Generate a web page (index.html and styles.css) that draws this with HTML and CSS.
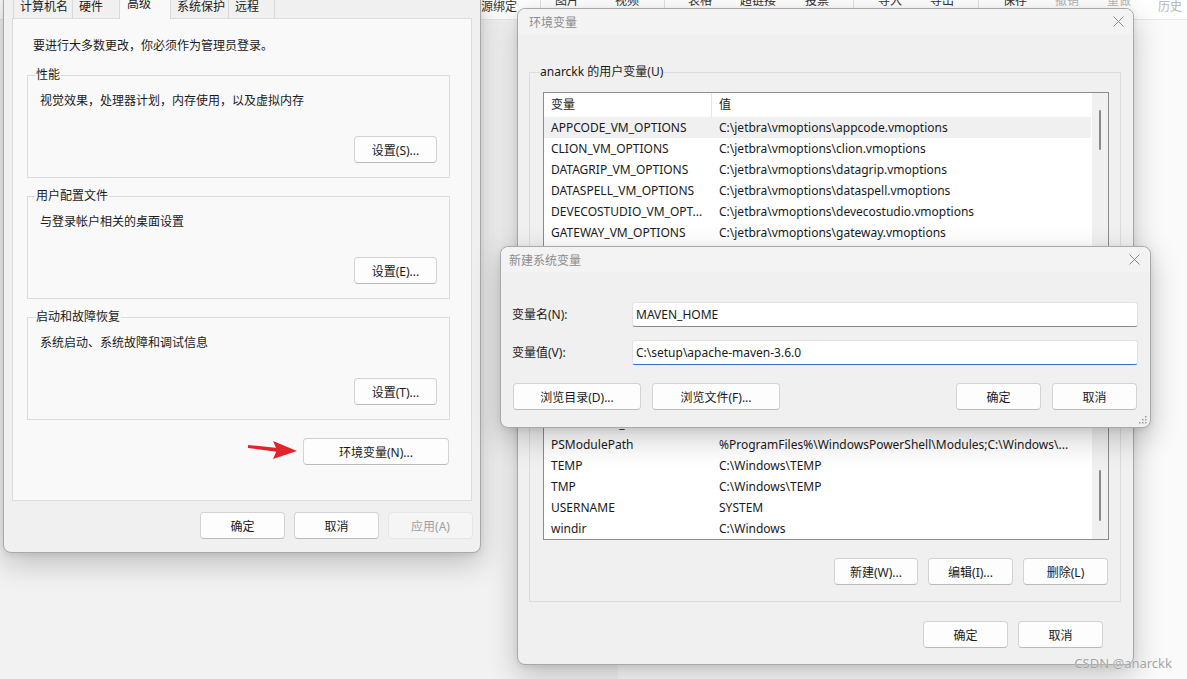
FILE: index.html
```html
<!DOCTYPE html>
<html lang="zh-CN">
<head>
<meta charset="utf-8">
<title>环境变量</title>
<link rel="stylesheet" href="styles.css">
</head>
<body>
<div class="desk">
  <div class="toolbar">
    <span class="tb tb-full">源绑定</span>
    <span class="tb-sep"></span>
    <span class="tb">图片</span>
    <span class="tb">视频</span>
    <span class="tb-sep"></span>
    <span class="tb">表格</span>
    <span class="tb">超链接</span>
    <span class="tb">投票</span>
    <span class="tb-sep"></span>
    <span class="tb">导入</span>
    <span class="tb">导出</span>
    <span class="tb-sep"></span>
    <span class="tb">保存</span>
    <span class="tb tb-dim">撤销</span>
    <span class="tb tb-dim">重做</span>
    <span class="tb tb-dim tb-full">历史</span>
  </div>
  <div class="workspace">
    <div class="ws-left"></div>
    <div class="ws-right"></div>
  </div>

  <!-- 系统属性 -->
  <section class="win sysprops">
    <div class="tabs">
      <div class="tab">计算机名</div>
      <div class="tab">硬件</div>
      <div class="tab active">高级</div>
      <div class="tab">系统保护</div>
      <div class="tab">远程</div>
    </div>
    <div class="tabpanel">
      <p class="note">要进行大多数更改，你必须作为管理员登录。</p>
      <fieldset class="group">
        <legend>性能</legend>
        <p class="desc">视觉效果，处理器计划，内存使用，以及虚拟内存</p>
        <div class="group-actions"><button class="btn btn-83">设置(S)...</button></div>
      </fieldset>
      <fieldset class="group">
        <legend>用户配置文件</legend>
        <p class="desc">与登录帐户相关的桌面设置</p>
        <div class="group-actions"><button class="btn btn-83">设置(E)...</button></div>
      </fieldset>
      <fieldset class="group">
        <legend>启动和故障恢复</legend>
        <p class="desc">系统启动、系统故障和调试信息</p>
        <div class="group-actions"><button class="btn btn-83">设置(T)...</button></div>
      </fieldset>
      <div class="env-row"><button class="btn btn-env">环境变量(N)...</button></div>
    </div>
    <div class="sp-footer">
      <button class="btn">确定</button>
      <button class="btn">取消</button>
      <button class="btn" disabled>应用(A)</button>
    </div>
    <svg class="arrow" width="56" height="24" viewBox="0 0 56 24">
      <polygon points="4,7 4,10 34,14 34,10" fill="#e3232b"/>
      <polygon points="29,3 53,13 29,21 33,12" fill="#e3232b"/>
    </svg>
  </section>

  <!-- 环境变量 -->
  <section class="win envvars">
    <div class="titlebar">
      <span>环境变量</span>
      <svg class="close" width="11" height="11" viewBox="0 0 11 11"><path d="M0.5 0.5 L10.5 10.5 M10.5 0.5 L0.5 10.5" stroke="#8a8a8a" stroke-width="1"/></svg>
    </div>
    <div class="env-body">
      <fieldset class="vargroup">
        <legend>anarckk 的用户变量(U)</legend>
        <div class="varlist">
          <div class="varlist-main">
            <div class="var-head"><div>变量</div><div>值</div></div>
            <div class="var-row sel"><div>APPCODE_VM_OPTIONS</div><div>C:\jetbra\vmoptions\appcode.vmoptions</div></div>
            <div class="var-row"><div>CLION_VM_OPTIONS</div><div>C:\jetbra\vmoptions\clion.vmoptions</div></div>
            <div class="var-row"><div>DATAGRIP_VM_OPTIONS</div><div>C:\jetbra\vmoptions\datagrip.vmoptions</div></div>
            <div class="var-row"><div>DATASPELL_VM_OPTIONS</div><div>C:\jetbra\vmoptions\dataspell.vmoptions</div></div>
            <div class="var-row"><div>DEVECOSTUDIO_VM_OPT...</div><div>C:\jetbra\vmoptions\devecostudio.vmoptions</div></div>
            <div class="var-row"><div>GATEWAY_VM_OPTIONS</div><div>C:\jetbra\vmoptions\gateway.vmoptions</div></div>
            <div class="var-row"><div>GOLAND_VM_OPTIONS</div><div>C:\jetbra\vmoptions\goland.vmoptions</div></div>
          </div>
          <div class="scrollbar"><div class="thumb thumb-user"></div></div>
        </div>
        <div class="var-actions">
          <button class="btn btn-84">新建(N)...</button>
          <button class="btn">编辑(E)...</button>
          <button class="btn">删除(D)</button>
        </div>
      </fieldset>
      <fieldset class="vargroup vargroup-sys">
        <legend>系统变量(S)</legend>
        <div class="varlist">
          <div class="varlist-main">
            <div class="var-head"><div>变量</div><div>值</div></div>
            <div class="var-row"><div>PROCESSOR_LEVEL</div><div>25</div></div>
            <div class="var-row"><div>PROCESSOR_REVISION</div><div>5000</div></div>
            <div class="var-row"><div>PSModulePath</div><div>%ProgramFiles%\WindowsPowerShell\Modules;C:\Windows\...</div></div>
            <div class="var-row"><div>TEMP</div><div>C:\Windows\TEMP</div></div>
            <div class="var-row"><div>TMP</div><div>C:\Windows\TEMP</div></div>
            <div class="var-row"><div>USERNAME</div><div>SYSTEM</div></div>
            <div class="var-row"><div>windir</div><div>C:\Windows</div></div>
          </div>
          <div class="scrollbar"><div class="thumb thumb-sys"></div></div>
        </div>
        <div class="var-actions">
          <button class="btn btn-84">新建(W)...</button>
          <button class="btn">编辑(I)...</button>
          <button class="btn">删除(L)</button>
        </div>
      </fieldset>
      <div class="env-footer">
        <button class="btn">确定</button>
        <button class="btn">取消</button>
      </div>
    </div>
  </section>

  <!-- 新建系统变量 -->
  <section class="win newvar">
    <div class="titlebar titlebar-nv">
      <span>新建系统变量</span>
      <svg class="close" width="11" height="11" viewBox="0 0 11 11"><path d="M0.5 0.5 L10.5 10.5 M10.5 0.5 L0.5 10.5" stroke="#8a8a8a" stroke-width="1"/></svg>
    </div>
    <div class="nv-body">
      <div class="field-row">
        <label class="field-label">变量名(N):</label>
        <div class="field">MAVEN_HOME</div>
      </div>
      <div class="field-row">
        <label class="field-label">变量值(V):</label>
        <div class="field focused">C:\setup\apache-maven-3.6.0</div>
      </div>
      <div class="nv-actions">
        <button class="btn btn-wide">浏览目录(D)...</button>
        <button class="btn btn-wide">浏览文件(F)...</button>
        <span class="spacer"></span>
        <button class="btn">确定</button>
        <button class="btn">取消</button>
      </div>
    </div>
    <svg class="grip" width="8" height="8" viewBox="0 0 8 8">
      <rect x="6" y="0" width="1.5" height="1.5" fill="#9a9a9a"/>
      <rect x="3" y="3" width="1.5" height="1.5" fill="#9a9a9a"/>
      <rect x="6" y="3" width="1.5" height="1.5" fill="#9a9a9a"/>
      <rect x="0" y="6" width="1.5" height="1.5" fill="#9a9a9a"/>
      <rect x="3" y="6" width="1.5" height="1.5" fill="#9a9a9a"/>
      <rect x="6" y="6" width="1.5" height="1.5" fill="#9a9a9a"/>
    </svg>
  </section>

  <div class="watermark">CSDN @anarckk</div>
</div>
</body>
</html>
```

FILE: styles.css
```css
* { box-sizing: border-box; }
html, body { margin: 0; padding: 0; }
body {
  width: 1187px;
  height: 679px;
  overflow: hidden;
  font-family: "Noto Sans", "Noto Sans CJK SC", sans-serif;
  font-size: 12px;
  color: #1a1a1a;
  background: #f3f3f3;
}
.desk {
  position: relative;
  width: 1187px;
  height: 679px;
  display: flex;
  flex-direction: column;
  overflow: hidden;
}

/* background app toolbar */
.toolbar {
  height: 20px;
  flex: none;
  background: #ffffff;
  border-bottom: 1px solid #e6e6e6;
  display: grid;
  grid-template-columns: 59px 15px 60px 49px 24px 52px 65px 48px 25px 52px 48px 25px 52px 52px 51px auto;
  padding-left: 481px;
  align-items: start;
  overflow: hidden;
}
.tb {
  line-height: 14px;
  margin-top: -6px;
  color: #333;
  white-space: nowrap;
}
.tb-full { margin-top: 0; }
.tb-dim { color: #b4b4b4; }
.tb-sep {
  height: 9px;
  border-left: 1px solid #e0e0e0;
}
.workspace {
  flex: 1;
  display: flex;
}
.ws-left { width: 618px; background: #f2f2f2; }
.ws-right { flex: 1; background: #fafafa; }

/* windows */
.win {
  position: absolute;
  background: #f0f0f0;
  border: 1px solid #a9a9a9;
  border-radius: 8px;
  box-shadow: 0 10px 30px rgba(0, 0, 0, 0.22), 0 2px 6px rgba(0, 0, 0, 0.08);
}
.btn {
  width: 85px;
  height: 27px;
  padding: 0;
  border: 1px solid #d3d3d3;
  border-bottom-color: #bababa;
  border-radius: 4px;
  background: #fdfdfd;
  font: inherit;
  color: #1a1a1a;
  white-space: nowrap;
}
.btn:disabled {
  background: #f5f5f5;
  border-color: #e6e6e6;
  color: #a0a0a0;
}
.btn-83 { width: 83px; }
.btn-84 { width: 84px; }
.btn-wide { width: 128px; }
.btn-env { width: 146px; }

/* System properties */
.sysprops {
  left: 3px;
  top: -12px;
  width: 478px;
  height: 565px;
  padding: 0 8px;
  display: flex;
  flex-direction: column;
  z-index: 1;
}
.tabs {
  display: grid;
  grid-template-columns: 59px 47px 51px 58px 46px;
  height: 29px;
  align-items: end;
  padding-left: 1px;
  flex: none;
}
.tab {
  height: 22px;
  padding: 2px 0 0 6px;
  line-height: 16px;
  border: 1px solid #d9d9d9;
  border-bottom: none;
  margin-right: -1px;
  background: #f0f0f0;
  white-space: nowrap;
}
.tab.active {
  height: 28px;
  padding: 4px 0 0 7px;
  margin-bottom: -1px;
  background: #f9f9f9;
  position: relative;
  z-index: 1;
}
.tabpanel {
  background: #f9f9f9;
  border: 1px solid #dcdcdc;
  padding: 19px 21px 35px 14px;
}
.note {
  margin: 0 0 13px 6px;
  line-height: 16px;
}
.group {
  margin: 0 0 10px;
  border: 1px solid #dcdcdc;
  padding: 0 12px 14px 8px;
  min-width: 0;
}
.group legend {
  padding: 0 1px 0 0;
  line-height: 16px;
}
.desc {
  margin: 10px 0 0 4px;
  line-height: 16px;
}
.group-actions {
  display: flex;
  justify-content: flex-end;
  margin-top: 27px;
}
.env-row {
  display: flex;
  justify-content: flex-end;
  margin-top: 18px;
  padding-right: 1px;
}
.sp-footer {
  display: flex;
  justify-content: flex-end;
  gap: 9px;
  margin: 11px -1px 0 0;
}
.arrow {
  position: absolute;
  left: 240px;
  top: 449px;
}

/* title bars */
.titlebar {
  height: 25px;
  display: flex;
  align-items: center;
  justify-content: space-between;
  padding: 0 9px 0 11px;
  color: #8c8c8c;
  background: #f3f3f3;
  border-radius: 8px 8px 0 0;
}
.titlebar-nv { padding: 0 10px 0 8px; }
.close { display: block; }

/* Environment variables */
.envvars {
  left: 517px;
  top: 8px;
  width: 617px;
  height: 657px;
  z-index: 2;
}
.env-body {
  padding: 30px 12px 0 11px;
}
.vargroup {
  margin: 0;
  border: 1px solid #dcdcdc;
  padding: 0 11px 16px 9px;
  min-width: 0;
}
.vargroup legend {
  padding: 0 1px 0 1px;
  line-height: 16px;
}
.vargroup-sys { margin-top: 12px; }
.varlist {
  margin: 12px 0 0 4px;
  height: 173px;
  border: 1px solid #8c8c8c;
  background: #ffffff;
  display: flex;
  overflow: hidden;
}
.varlist-main {
  flex: 1;
  min-width: 0;
  overflow: hidden;
}
.scrollbar {
  width: 17px;
  flex: none;
  background: #f0f0f0;
  border-left: 1px solid #ffffff;
}
.thumb {
  width: 2px;
  margin-left: 7px;
  border-radius: 1px;
  background: #8a8a8a;
}
.thumb-user { margin-top: 17px; height: 40px; }
.thumb-sys { margin-top: 102px; height: 51px; }
.var-head {
  display: grid;
  grid-template-columns: 168px 1fr;
  height: 24px;
}
.var-head > div {
  padding: 4px 0 0 7px;
  line-height: 16px;
}
.var-head > div:first-child { border-right: 1px solid #e5e5e5; }
.var-row {
  display: grid;
  grid-template-columns: 168px 1fr;
  height: 21px;
  line-height: 21px;
}
.var-row > div {
  padding-left: 7px;
  white-space: nowrap;
  overflow: hidden;
}
.var-row.sel { background: #f0f0f0; }
.var-actions {
  display: flex;
  justify-content: flex-end;
  gap: 10px;
  margin-top: 18px;
  padding-right: 1px;
}
.env-footer {
  display: flex;
  justify-content: flex-end;
  gap: 10px;
  margin-top: 19px;
  padding-right: 18px;
}

/* New system variable */
.newvar {
  left: 500px;
  top: 246px;
  width: 651px;
  height: 182px;
  z-index: 3;
}
.nv-body {
  padding: 30px 12px 0 11px;
}
.field-row {
  display: flex;
  align-items: center;
  height: 25px;
  margin-bottom: 13px;
}
.field-label {
  width: 120px;
  flex: none;
  line-height: 16px;
}
.field {
  flex: 1;
  height: 25px;
  background: #ffffff;
  border: 1px solid #e3e3e3;
  border-bottom-color: #8a8a8a;
  border-radius: 3px;
  padding-left: 3px;
  line-height: 23px;
  white-space: nowrap;
}
.field.focused {
  border-bottom: 1px solid #2f72c4;
}
.nv-actions {
  display: flex;
  gap: 11px;
  margin: 18px 1px 0 1px;
}
.nv-actions .spacer { flex: 1; }
.grip {
  position: absolute;
  right: 3px;
  bottom: 3px;
}

.watermark {
  position: absolute;
  right: 15px;
  top: 655px;
  font-size: 13px;
  line-height: 16px;
  color: #a3a3a3;
  text-shadow: 0 0 1px #ffffff;
  z-index: 5;
}
```
